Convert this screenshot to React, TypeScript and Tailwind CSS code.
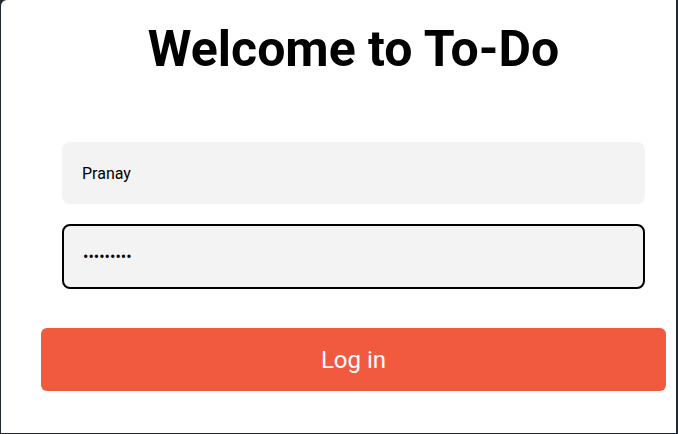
import React from "react";

export default function App() {
  return (
    <div className="w-[678px] h-[434px] bg-[#1f2a36] overflow-hidden" style={{ fontFamily: "Roboto, 'Liberation Sans', sans-serif" }}>
      <div className="ml-[1px] mr-[2px] h-[433px] bg-white rounded-tl-[6px] flex flex-col pl-[40px]">
        <h1 className="w-[625px] text-center text-[50px] leading-none font-bold text-black mt-[24px]">Welcome to To-Do</h1>
        <div className="w-[625px] px-[21px] mt-[68px] flex flex-col">
          <input
            className="w-full h-[62px] rounded-[8px] bg-[#f3f3f3] pl-[20px] text-[16px] text-black outline-none"
            defaultValue="Pranay"
          />
          <input
            type="password"
            className="w-full h-[65px] mt-[20px] rounded-[8px] bg-[#f3f3f3] border-2 border-black pl-[19px] text-[16px] text-black outline-none"
            defaultValue="123456789"
          />
        </div>
        <button className="w-[625px] h-[63px] mt-[39px] rounded-[6px] bg-[#f25a40] text-white text-[24px]">Log in</button>
      </div>
    </div>
  );
}
